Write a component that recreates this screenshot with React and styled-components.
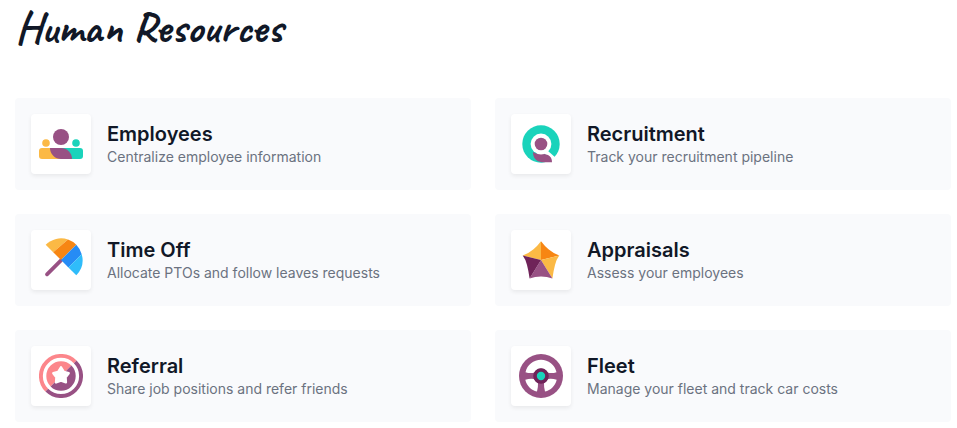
import styled, { createGlobalStyle } from "styled-components";

const GlobalStyle = createGlobalStyle`
  * {
    box-sizing: border-box;
  }

  body {
    margin: 0;
    background-color: #fff;
    color: #111827;
    font-family: "Inter", "Liberation Sans", sans-serif;
  }
`;

const Section = styled.section`
  padding: 0 6px 6px 15px;
`;

const Heading = styled.h2`
  margin: 0 0 42px;
  font-family: "Caveat", cursive;
  font-size: 45px;
  font-weight: 700;
  line-height: 56px;
`;

const AppGrid = styled.div`
  display: grid;
  grid-template-columns: repeat(2, minmax(0, 1fr));
  gap: 24px;
`;

const AppCard = styled.a`
  display: flex;
  align-items: center;
  gap: 16px;
  padding: 16px;
  border-radius: 4px;
  background-color: #f9fafc;
  color: inherit;
  text-decoration: none;
`;

const IconTile = styled.span`
  display: flex;
  flex: none;
  align-items: center;
  justify-content: center;
  width: 60px;
  height: 60px;
  border-radius: 4px;
  background-color: #fff;
  box-shadow: 0 2px 4px rgba(0, 0, 0, 0.07);
`;

const Icon = styled.svg`
  display: block;
  width: 44px;
  height: 44px;
`;

const CardText = styled.div`
  min-width: 0;
  padding-top: 2px;
`;

const Title = styled.h3`
  margin: 0;
  font-size: 20px;
  font-weight: 600;
  line-height: 24px;
`;

const Description = styled.p`
  margin: 0;
  color: #6b7280;
  font-size: 14px;
  line-height: 22px;
`;

const purple = "#985184";
const plum = "#6f2359";
const teal = "#1ad3bb";
const yellow = "#fbb945";
const orange = "#f78613";
const blue = "#268cf5";
const sky = "#2fbcfa";
const pink = "#fc868b";

function EmployeesIcon() {
  return (
    <>
      <circle cx="22" cy="15" r="8" fill={purple} />
      <circle cx="7" cy="21" r="3.8" fill={yellow} />
      <circle cx="37" cy="21" r="3.8" fill={teal} />
      <path d="M3 26H22V37H3a3 3 0 0 1-3-3V29a3 3 0 0 1 3-3Z" fill={yellow} />
      <path d="M22 26H41a3 3 0 0 1 3 3V34a3 3 0 0 1-3 3H22Z" fill={teal} />
      <path d="M11 26H22a11 11 0 0 1 11 11H22a11 11 0 0 1-11-11Z" fill={purple} />
    </>
  );
}

function RecruitmentIcon() {
  return (
    <>
      <circle cx="22" cy="22" r="18.7" fill={teal} />
      <path d="M25 31L29 29L37 36L34 41Z" fill="#fff" />
      <path d="M14 30C19 33 24 31 29 33Q33 35 33 40.3H23C17 39.5 14 36 14 30Z" fill={purple} />
      <circle cx="22" cy="22" r="10.4" fill="#fff" />
      <circle cx="22" cy="22" r="6.3" fill={purple} />
    </>
  );
}

function TimeOffIcon() {
  return (
    <>
      <path d="M8 36.3L22 22.3" stroke={purple} strokeWidth="3.8" strokeLinecap="round" />
      <path d="M6.7 6.7A21.6 21.6 0 0 1 29 1.5L14.2 14.2Z" fill={yellow} />
      <path d="M29 1.5A21.6 21.6 0 0 1 37.3 6.7L22 22L14.2 14.2Z" fill={orange} />
      <path d="M37.3 6.7A21.6 21.6 0 0 1 42.7 16.3L29.4 29.4L22 22Z" fill={blue} />
      <path d="M42.7 16.3A21.6 21.6 0 0 1 37.3 37.3L29.4 29.4Z" fill={sky} />
    </>
  );
}

function AppraisalsIcon() {
  return (
    <>
      <path d="M22 3.3Q18.5 8 14.5 11.2Q10 15 3.7 17.6L22 22Z" fill={yellow} />
      <path d="M22 3.3Q25.5 8 29.5 11.2Q34 15 40.3 17.6L22 22Z" fill={orange} />
      <path d="M40.3 17.6Q37 22 36 27Q34.4 33 33.4 40.5L22 22Z" fill={yellow} />
      <path d="M33.4 40.5Q28 38.6 22 38.6T10.6 40.5L22 22Z" fill={purple} />
      <path d="M10.6 40.5Q9.6 33 8 27Q7 22 3.7 17.6L22 22Z" fill={plum} />
    </>
  );
}

function ReferralIcon() {
  return (
    <>
      <path d="M7.8 36.2A20 20 0 1 1 36.2 7.8" fill="none" stroke={pink} strokeWidth="3.9" />
      <path d="M36.2 7.8A20 20 0 0 1 7.8 36.2" fill="none" stroke={purple} strokeWidth="3.9" />
      <path d="M11.6 32.4A14.7 14.7 0 0 1 32.4 11.6Z" fill={pink} />
      <path d="M32.4 11.6A14.7 14.7 0 0 1 11.6 32.4Z" fill={purple} />
      <path
        d="M22 13.3L24.8 17.9L29.7 19.2L26.6 23.3L26.9 28.4L22 26.7L17.1 28.4L17.4 23.3L14.3 19.2L19.2 17.9Z"
        fill="#fff"
        stroke="#fff"
        strokeWidth="2.4"
        strokeLinejoin="round"
      />
    </>
  );
}

function FleetIcon() {
  return (
    <>
      <circle cx="22" cy="22" r="22" fill={purple} />
      <path d="M6.5 18.2C8.2 10.8 14.5 5.8 22 5.8S35.8 10.8 37.5 18.2Q33 19.8 28.4 18.6Q26 14.6 22 14.6T15.6 18.6Q11 19.8 6.5 18.2Z" fill="#fff" />
      <path d="M6.3 25.7Q11 24.2 15.4 25Q16.8 28 19 29.2Q19.2 33 18 37.6C12.3 36.3 7.7 31.8 6.3 25.7Z" fill="#fff" />
      <path d="M37.7 25.7Q33 24.2 28.6 25Q27.2 28 25 29.2Q24.8 33 26 37.6C31.7 36.3 36.3 31.8 37.7 25.7Z" fill="#fff" />
      <circle cx="22" cy="22" r="6" fill={teal} stroke={plum} strokeWidth="3.6" />
    </>
  );
}

const apps = [
  { title: "Employees", description: "Centralize employee information", Drawing: EmployeesIcon },
  { title: "Recruitment", description: "Track your recruitment pipeline", Drawing: RecruitmentIcon },
  { title: "Time Off", description: "Allocate PTOs and follow leaves requests", Drawing: TimeOffIcon },
  { title: "Appraisals", description: "Assess your employees", Drawing: AppraisalsIcon },
  { title: "Referral", description: "Share job positions and refer friends", Drawing: ReferralIcon },
  { title: "Fleet", description: "Manage your fleet and track car costs", Drawing: FleetIcon },
];

export default function App() {
  return (
    <>
      <GlobalStyle />
      <Section>
        <Heading>Human Resources</Heading>
        <AppGrid>
          {apps.map(({ title, description, Drawing }) => (
            <AppCard key={title} href="#">
              <IconTile>
                <Icon viewBox="0 0 44 44" aria-hidden="true">
                  <Drawing />
                </Icon>
              </IconTile>
              <CardText>
                <Title>{title}</Title>
                <Description>{description}</Description>
              </CardText>
            </AppCard>
          ))}
        </AppGrid>
      </Section>
    </>
  );
}
